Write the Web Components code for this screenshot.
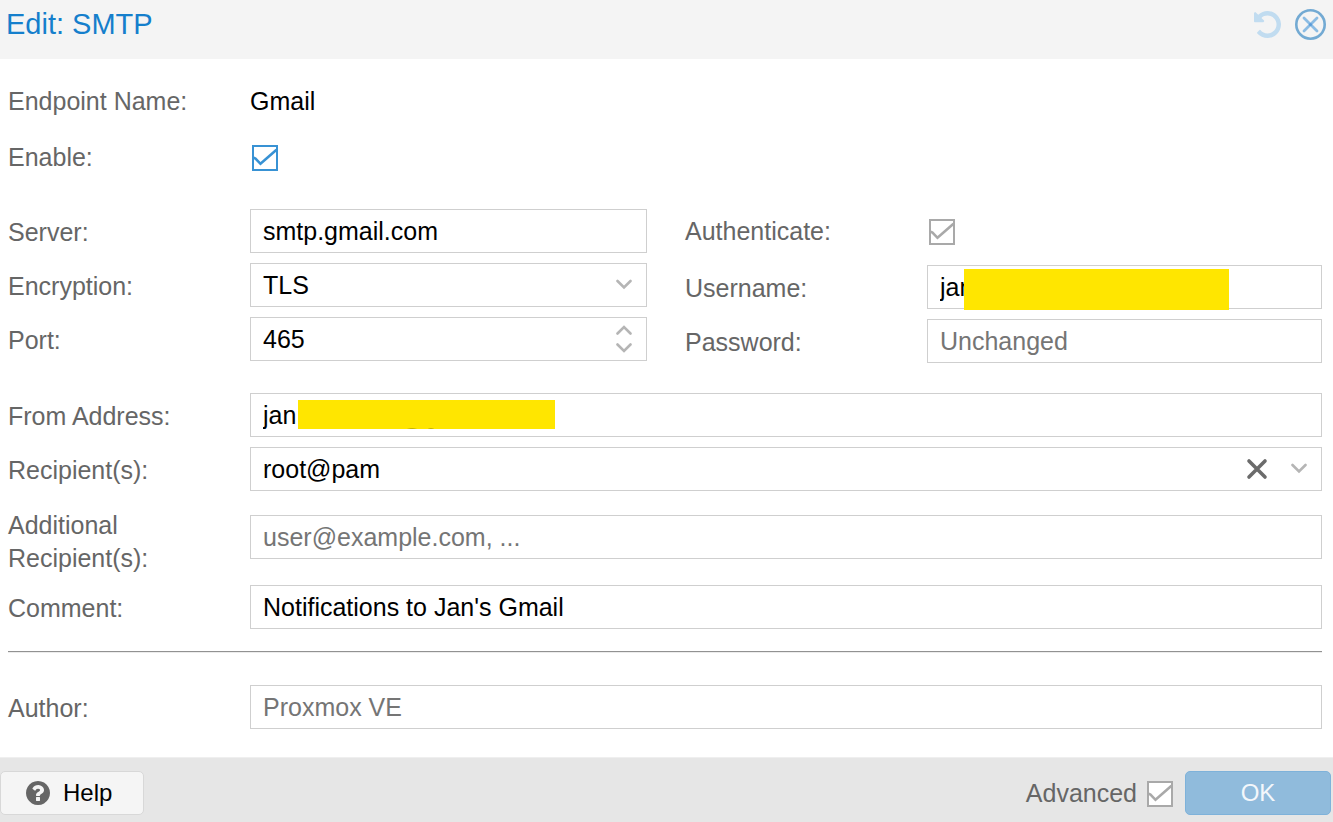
<!DOCTYPE html>
<html lang="en">
<head>
<meta charset="utf-8">
<title>Edit: SMTP</title>
<style>
  body { margin: 0; background: #fff; color: #000; font: 25px/33px "Liberation Sans", Arial, sans-serif; }
</style>
</head>
<body>
<smtp-dialog></smtp-dialog>

<template id="t-check">
  <style>
    :host { display: inline-grid; }
    input, svg { grid-area: 1 / 1; width: 28px; height: 28px; margin: 0; }
    input { appearance: none; }
    svg { pointer-events: none; }
    .tick { display: none; }
    input:checked + svg .tick { display: block; }
    label { display: flex; align-items: center; gap: 8px; color: #666; }
    .box { display: grid; color: #a9a9a9; }
    :host([accent]) .box { color: #3892d4; }
  </style>
  <label>
    <slot></slot>
    <span class="box">
      <input type="checkbox" checked>
      <svg viewBox="0 0 28 28" fill="none" stroke="currentColor" stroke-width="2">
        <rect x="3" y="3" width="24" height="24" fill="#fff"/>
        <path class="tick" d="M3.500 14.800L5.500 15.500 10.500 20.800 26.500 6.800" stroke-width="2.600"/>
      </svg>
    </span>
  </label>
</template>

<template id="t-field">
  <style>
    :host { display: grid; grid-template-columns: 242px minmax(0, 1fr); align-items: start; }
    label { color: #666; padding-top: 7px; }
    :host([kind=display]) label, :host([kind=check]) label { padding-top: 6px; }
    :host([tall]) label { padding-top: 0; }
    :host([tall]) .box { margin-top: 6px; }
    .box { position: relative; display: flex; align-items: center; box-sizing: border-box; height: 44px; border: 1px solid #cfcfcf; background: #fff; }
    .box.plain { border: 0; background: none; }
    input, select { flex: 1; min-width: 0; width: 100%; height: 100%; box-sizing: border-box; margin: 0; border: 0; padding: 0 12px; background: none; color: #000; font: inherit; outline: 0; appearance: none; }
    input[type=number] { appearance: textfield; }
    input::-webkit-inner-spin-button { appearance: none; margin: 0; }
    input::placeholder { color: #757575; opacity: 1; }
  </style>
  <label for="control"></label>
  <div class="box"><slot></slot></div>
</template>

<template id="t-trigger">
  <style>
    :host { display: flex; }
    button { display: grid; place-items: center; padding: 4px; border: 0; background: none; color: #b5b5b5; }
    svg { display: block; fill: none; stroke: currentColor; stroke-linecap: round; }
    .clear { color: #6b6b6b; }
  </style>
  <button type="button"></button>
</template>

<template id="t-mask">
  <style>
    :host { position: absolute; background: #ffe600; }
  </style>
</template>

<template id="t-dialog">
  <style>
    :host { display: flex; flex-direction: column; min-height: 100vh; }
    header { display: flex; align-items: center; gap: 14px; box-sizing: border-box; height: 59px; padding: 0 7px 10px 6px; background: #f4f4f4; }
    h1 { flex: 1; margin: 0; color: #157fcc; font: 29px/33px "Liberation Sans", Arial, sans-serif; }
    button { font: inherit; }
    .tool { display: block; padding: 0; border: 0; background: none; }
    svg { display: block; }
    form { flex: 1; display: flex; flex-direction: column; gap: 30px; padding: 20px 11px 28px 8px; }
    section, .column { display: flex; flex-direction: column; gap: 10px; }
    .identity { gap: 12px; }
    .pair { display: grid; grid-template-columns: 639fr 637fr; gap: 38px; }
    .first { height: 46px; }
    .extra { margin-top: 8px; }
    hr { margin: 12px 0 22px; width: 100%; border: 0; border-top: 1px solid #929292; border-bottom: 1px solid #ececec; box-sizing: border-box; height: 2px; }
    .user { left: 36px; top: 3px; width: 265px; height: 41px; }
    .from { left: 47px; top: 6px; width: 257px; height: 29px; background:
      radial-gradient(ellipse 6px 1px at 114px 29px, #8f8100, transparent),
      radial-gradient(ellipse 4px 1px at 133px 29px, #8f8100, transparent), #ffe600; }
    footer { display: flex; align-items: center; box-sizing: border-box; height: 66px; padding: 13px 2px 8px 0; border-top: 1px solid #efefef; background: #e6e6e6; }
    .help, .ok { box-sizing: border-box; height: 44px; border-radius: 5px; font-size: 24px; }
    .help { display: flex; align-items: center; gap: 13px; width: 144px; margin-right: auto; padding: 0 25px; border: 1px solid #d8d8d8; background: #f5f5f5; color: #000; }
    .ok { width: 146px; margin-left: 12px; padding: 0 0 2px; border: 1px solid #7eb2da; background: #90bbdc; color: #f3f7fb; }
    .help span { padding-bottom: 2px; }
  </style>
  <header>
    <h1>Edit: SMTP</h1>
    <button class="tool" type="button" aria-label="Reset">
      <svg width="27" height="27" viewBox="0 128 1536 1536" fill="#c1dcf0"><path d="M1536 896q0 156-61 298t-164 245-245 164-298 61q-172 0-327-72.500T177 1387q-7-10-6.500-22.500t8.500-20.500l137-138q10-9 25-9 16 2 23 12 73 95 179 147t225 52q104 0 198.500-40.500T1131 1258t109.500-163.500T1281 896t-40.500-198.500T1131 534 967.500 424.500 769 384q-98 0-188 35.500T421 521l137 138q31 30 14 69-17 40-59 40H65q-26 0-45-19T1 704V256q0-42 40-59 39-17 69 14l130 129q107-101 244.500-156.500T769 128q156 0 298 61t245 164 164 245 61 298z"/></svg>
    </button>
    <button class="tool" type="button" aria-label="Close">
      <svg width="31" height="31" viewBox="0 0 31 31" fill="none" stroke-linecap="round"><circle cx="15.500" cy="15.500" r="14.200" stroke="#73aad3" stroke-width="2.600"/><path d="M9 9l13 13M22 9l-13 13" stroke="#8bbce4" stroke-width="2.800"/><circle cx="15.500" cy="15.500" r="1.600" fill="#5a9bd8"/></svg>
    </button>
  </header>
  <form>
    <section class="identity">
      <form-field label="Endpoint Name:" kind="display" value="Gmail"></form-field>
      <form-field label="Enable:" kind="check" accent></form-field>
    </section>
    <section class="pair">
      <div class="column">
        <form-field label="Server:" value="smtp.gmail.com"></form-field>
        <form-field label="Encryption:" kind="select" value="TLS"><field-trigger icon="down"></field-trigger></form-field>
        <form-field label="Port:" kind="number" value="465"><field-trigger icon="spin"></field-trigger></form-field>
      </div>
      <div class="column">
        <form-field class="first" label="Authenticate:" kind="check"></form-field>
        <form-field label="Username:" value="jan"><value-mask class="user"></value-mask></form-field>
        <form-field label="Password:" kind="password" placeholder="Unchanged"></form-field>
      </div>
    </section>
    <section>
      <form-field label="From Address:" value="jan"><value-mask class="from"></value-mask></form-field>
      <form-field label="Recipient(s):" value="root@pam"><field-trigger icon="clear"></field-trigger><field-trigger icon="down"></field-trigger></form-field>
      <form-field class="extra" tall label="Additional Recipient(s):" placeholder="user@example.com, ..."></form-field>
      <form-field label="Comment:" value="Notifications to Jan's Gmail"></form-field>
      <hr>
      <form-field label="Author:" placeholder="Proxmox VE"></form-field>
    </section>
  </form>
  <footer>
    <button class="help" type="button">
      <svg width="24" height="24" viewBox="0 128 1536 1536" fill="#666"><path d="M896 1376v-192q0-14-9-23t-23-9H672q-14 0-23 9t-9 23v192q0 14 9 23t23 9h192q14 0 23-9t9-23zm256-672q0-88-55.500-163T958 425t-170-41q-243 0-371 213-15 24 8 42l132 100q7 6 19 6 16 0 25-12 53-68 86-92 34-24 86-24 48 0 85.500 26t37.500 59q0 38-20 61t-68 45q-63 28-115.500 86.500T640 1020v36q0 14 9 23t23 9h192q14 0 23-9t9-23q0-19 21.500-49.500T972 957q32-18 49-28.500t46-35 44.500-48 28-60.500 12.500-81zm384 192q0 209-103 385.500T1153.500 1561 768 1664t-385.500-103T103 1281.500 0 896t103-385.500T382.500 231 768 128t385.500 103T1433 510.500 1536 896z"/></svg>
      <span>Help</span>
    </button>
    <check-box>Advanced</check-box>
    <button class="ok" type="button">OK</button>
  </footer>
</template>

<script>
  const stamp = (host, id) => {
    const root = host.attachShadow({ mode: "open" });
    root.append(document.getElementById(id).content.cloneNode(true));
    return root;
  };

  class CheckBox extends HTMLElement {
    connectedCallback() {
      if (this.shadowRoot) return;
      const root = stamp(this, "t-check");
      const name = this.getAttribute("label");
      if (name) {
        root.querySelector("input").setAttribute("aria-label", name);
        root.querySelector("slot").remove();
      }
    }
  }

  class FieldTrigger extends HTMLElement {
    connectedCallback() {
      if (this.shadowRoot) return;
      const icons = {
        down: ["Open list", '<svg width="16" height="12" viewBox="0 0 16 12" stroke-width="2.600"><path d="M1.500 2L8 8.500 14.500 2"/></svg>'],
        spin: ["Change value", '<svg width="16" height="30" viewBox="0 0 16 30" stroke-width="2.600"><path d="M1.500 9.500L8 3 14.500 9.500M1.500 20.500L8 27 14.500 20.500"/></svg>'],
        clear: ["Clear", '<svg width="22" height="22" viewBox="0 0 22 22" stroke-width="3.600"><path d="M3 3l16 16M19 3L3 19"/></svg>']
      };
      const kind = this.getAttribute("icon");
      const button = stamp(this, "t-trigger").querySelector("button");
      button.setAttribute("aria-label", icons[kind][0]);
      button.className = kind;
      button.innerHTML = icons[kind][1];
      this.style.marginRight = kind === "clear" ? "15px" : "10px";
    }
  }

  class ValueMask extends HTMLElement {
    connectedCallback() { if (!this.shadowRoot) stamp(this, "t-mask"); }
  }

  class FormField extends HTMLElement {
    connectedCallback() {
      if (this.shadowRoot) return;
      const root = stamp(this, "t-field");
      const kind = this.getAttribute("kind") || "text";
      const value = this.getAttribute("value") || "";
      const label = root.querySelector("label");
      const box = root.querySelector(".box");
      label.textContent = this.getAttribute("label");
      let control;
      if (kind === "display") {
        control = document.createElement("output");
        control.textContent = value;
        box.classList.add("plain");
      } else if (kind === "check") {
        control = document.createElement("check-box");
        control.setAttribute("label", label.textContent);
        control.toggleAttribute("accent", this.hasAttribute("accent"));
        box.classList.add("plain");
        label.addEventListener("click", () => control.shadowRoot.querySelector("input").click());
      } else if (kind === "select") {
        control = document.createElement("select");
        control.add(new Option(value, value, true, true));
      } else {
        control = document.createElement("input");
        control.type = kind;
        control.setAttribute("value", value);
        control.placeholder = this.getAttribute("placeholder") || "";
      }
      control.id = "control";
      box.prepend(control);
    }
  }

  class SmtpDialog extends HTMLElement {
    connectedCallback() { if (!this.shadowRoot) stamp(this, "t-dialog"); }
  }

  customElements.define("check-box", CheckBox);
  customElements.define("field-trigger", FieldTrigger);
  customElements.define("value-mask", ValueMask);
  customElements.define("form-field", FormField);
  customElements.define("smtp-dialog", SmtpDialog);
</script>
</body>
</html>
